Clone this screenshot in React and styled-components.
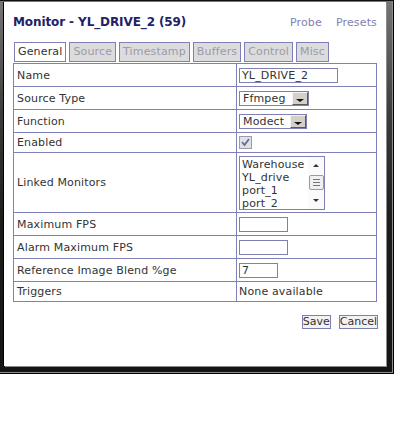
import React from 'react'
import styled, { createGlobalStyle } from 'styled-components'

const GlobalStyle = createGlobalStyle`
  html, body {
    margin: 0;
    padding: 0;
    background: #fff;
  }
  body {
    font-family: "DejaVu Sans", Verdana, sans-serif;
    font-size: 11px;
    letter-spacing: 0.15px;
    color: #333;
  }
`;

const Frame = styled.div`
  width: 394px;
  height: 374px;
  box-sizing: border-box;
  padding: 1px 7px 7px 4px;
  border-top: 1px solid #111;
  border-right: 1px solid #000;
  border-bottom: 1px solid #000;
  background: linear-gradient(to bottom, #767676 0%, #3c3c3c 30%, #1c1c1c 60%, #151515 100%);
  box-shadow: inset -1px -1px 0 #8c8c8c;
`;

const Window = styled.div`
  width: 382px;
  height: 364px;
  box-sizing: border-box;
  padding: 13px 9px 0 9px;
  background: #fff;
  box-shadow: 1px 1px 0 #8c8c8c, -1px 0 0 #000;
`;

const Header = styled.div`
  display: flex;
  justify-content: space-between;
  align-items: baseline;
  height: 14px;
`;

const Title = styled.h2`
  margin: 0;
  font-size: 12px;
  line-height: 14px;
  font-weight: bold;
  letter-spacing: -0.1px;
  color: #222266;
`;

const Links = styled.div`
  display: flex;
  gap: 14px;
`;

const Link = styled.a`
  color: #7f7fb2;
  text-decoration: none;
  font-size: 11px;
`;

const Tabs = styled.ul`
  display: flex;
  gap: 3px;
  margin: 13px 0 0 1px;
  padding: 0;
  list-style: none;
`;

const Tab = styled.li`
  height: 20px;
  box-sizing: border-box;
  padding: 0 3px;
  border: 1px solid #8080b8;
  line-height: 18px;
  background: ${({ $active }) => ($active ? '#fff' : '#dcdcdc')};
  color: ${({ $active }) => ($active ? '#333' : '#9a9aaa')};
`;

const Table = styled.div`
  margin-top: 1px;
  width: 364px;
  box-sizing: border-box;
  border-top: 1px solid #8080b8;
  border-left: 1px solid #8080b8;
`;

const Row = styled.div`
  display: grid;
  grid-template-columns: 223px 1fr;
  height: ${({ $h }) => $h}px;
`;

const Cell = styled.div`
  display: flex;
  align-items: center;
  box-sizing: border-box;
  border-right: 1px solid #8080b8;
  border-bottom: 1px solid #8080b8;
  padding-left: ${({ $label }) => ($label ? 3 : 2)}px;
`;

const TextInput = styled.input`
  box-sizing: border-box;
  width: ${({ $w }) => $w}px;
  height: 15px;
  margin: 0;
  padding: 0 2px;
  border: 1px solid #7f7fb2;
  font-family: "DejaVu Sans", Verdana, sans-serif;
  font-size: 11px;
  letter-spacing: 0.15px;
  color: #333;
  background: #fff;
  outline: none;
`;

const Select = styled.div`
  display: flex;
  align-items: center;
  box-sizing: border-box;
  width: ${({ $w }) => $w}px;
  height: 15px;
  border: 1px solid #7f7fb2;
  background: #fff;
`;

const SelectText = styled.span`
  flex: 1;
  padding-left: 3px;
  line-height: 13px;
`;

const SelectButton = styled.span`
  position: relative;
  width: 16px;
  height: 13px;
  box-sizing: border-box;
  background: #d4d0c8;
  border: 1px solid;
  border-color: #f4f4f4 #5a5a5a #5a5a5a #f4f4f4;
  &::after {
    content: '';
    position: absolute;
    left: 3px;
    bottom: 2px;
    border-left: 4px solid transparent;
    border-right: 4px solid transparent;
    border-top: 3px solid #111;
  }
`;

const Checkbox = styled.span`
  display: inline-flex;
  width: 13px;
  height: 13px;
  box-sizing: border-box;
  border: 1px solid #9a9aa8;
  background: #e2e2e2;
`;

const ListBox = styled.div`
  display: flex;
  width: 86px;
  height: 54px;
  box-sizing: border-box;
  border: 1px solid #7f7fb2;
  background: #fff;
  overflow: hidden;
`;

const Options = styled.div`
  flex: 1;
  padding: 1px 0 0 2px;
  line-height: 13px;
  overflow: hidden;
  white-space: nowrap;
`;

const Scrollbar = styled.div`
  display: flex;
  flex-direction: column;
  align-items: center;
  width: 16px;
  background: #fafafa;
`;

const Arrow = styled.span`
  margin: ${({ $up }) => ($up ? '7px 0 0' : 'auto 0 7px')};
  border-left: 3px solid transparent;
  border-right: 3px solid transparent;
  ${({ $up }) => ($up ? 'border-bottom: 3px solid #333;' : 'border-top: 3px solid #333;')}
`;

const Thumb = styled.span`
  display: flex;
  flex-direction: column;
  justify-content: center;
  gap: 2px;
  margin-top: 8px;
  width: 15px;
  height: 15px;
  box-sizing: border-box;
  padding: 0 3px;
  border: 1px solid #9a9a9a;
  border-radius: 2px;
  background: #f0f0f0;
  & > i {
    display: block;
    height: 1px;
    background: #777;
  }
`;

const Actions = styled.div`
  display: flex;
  justify-content: flex-end;
  gap: 8px;
  margin: 13px -1px 0 0;
`;

const Button = styled.button`
  height: 14px;
  margin: 0;
  padding: 0;
  border: 1px solid #7f7fb2;
  background: #f2f2f2;
  color: #333;
  font-family: "DejaVu Sans", Verdana, sans-serif;
  font-size: 11px;
  line-height: 12px;
`;

const tabs = ['General', 'Source', 'Timestamp', 'Buffers', 'Control', 'Misc'];

export default function App() {
  return (
    <>
      <GlobalStyle />
      <Frame>
        <Window>
          <Header>
            <Title>Monitor - YL_DRIVE_2 (59)</Title>
            <Links>
              <Link href="#">Probe</Link>
              <Link href="#">Presets</Link>
            </Links>
          </Header>
          <Tabs>
            {tabs.map((t, i) => (
              <Tab key={t} $active={i === 0}>{t}</Tab>
            ))}
          </Tabs>
          <Table>
            <Row $h={23}>
              <Cell $label>Name</Cell>
              <Cell><TextInput $w={99} readOnly value="YL_DRIVE_2" /></Cell>
            </Row>
            <Row $h={23}>
              <Cell $label>Source Type</Cell>
              <Cell>
                <Select $w={70}><SelectText>Ffmpeg</SelectText><SelectButton /></Select>
              </Cell>
            </Row>
            <Row $h={23}>
              <Cell $label>Function</Cell>
              <Cell>
                <Select $w={68}><SelectText>Modect</SelectText><SelectButton /></Select>
              </Cell>
            </Row>
            <Row $h={20}>
              <Cell $label>Enabled</Cell>
              <Cell>
                <Checkbox>
                  <svg width="11" height="11" viewBox="0 0 11 11">
                    <polyline points="2,5 4.5,8 9,2" fill="none" stroke="#5a6ea8" strokeWidth="1.8" />
                  </svg>
                </Checkbox>
              </Cell>
            </Row>
            <Row $h={60}>
              <Cell $label>Linked Monitors</Cell>
              <Cell>
                <ListBox>
                  <Options>
                    <div>Warehouse</div>
                    <div>YL_drive</div>
                    <div>port_1</div>
                    <div>port_2</div>
                  </Options>
                  <Scrollbar>
                    <Arrow $up />
                    <Thumb><i /><i /><i /></Thumb>
                    <Arrow />
                  </Scrollbar>
                </ListBox>
              </Cell>
            </Row>
            <Row $h={23}>
              <Cell $label>Maximum FPS</Cell>
              <Cell><TextInput $w={49} readOnly value="" /></Cell>
            </Row>
            <Row $h={23}>
              <Cell $label>Alarm Maximum FPS</Cell>
              <Cell><TextInput $w={49} readOnly value="" /></Cell>
            </Row>
            <Row $h={23}>
              <Cell $label>Reference Image Blend %ge</Cell>
              <Cell><TextInput $w={39} readOnly value="7" /></Cell>
            </Row>
            <Row $h={20}>
              <Cell $label>Triggers</Cell>
              <Cell>None available</Cell>
            </Row>
          </Table>
          <Actions>
            <Button>Save</Button>
            <Button>Cancel</Button>
          </Actions>
        </Window>
      </Frame>
    </>
  );
}
